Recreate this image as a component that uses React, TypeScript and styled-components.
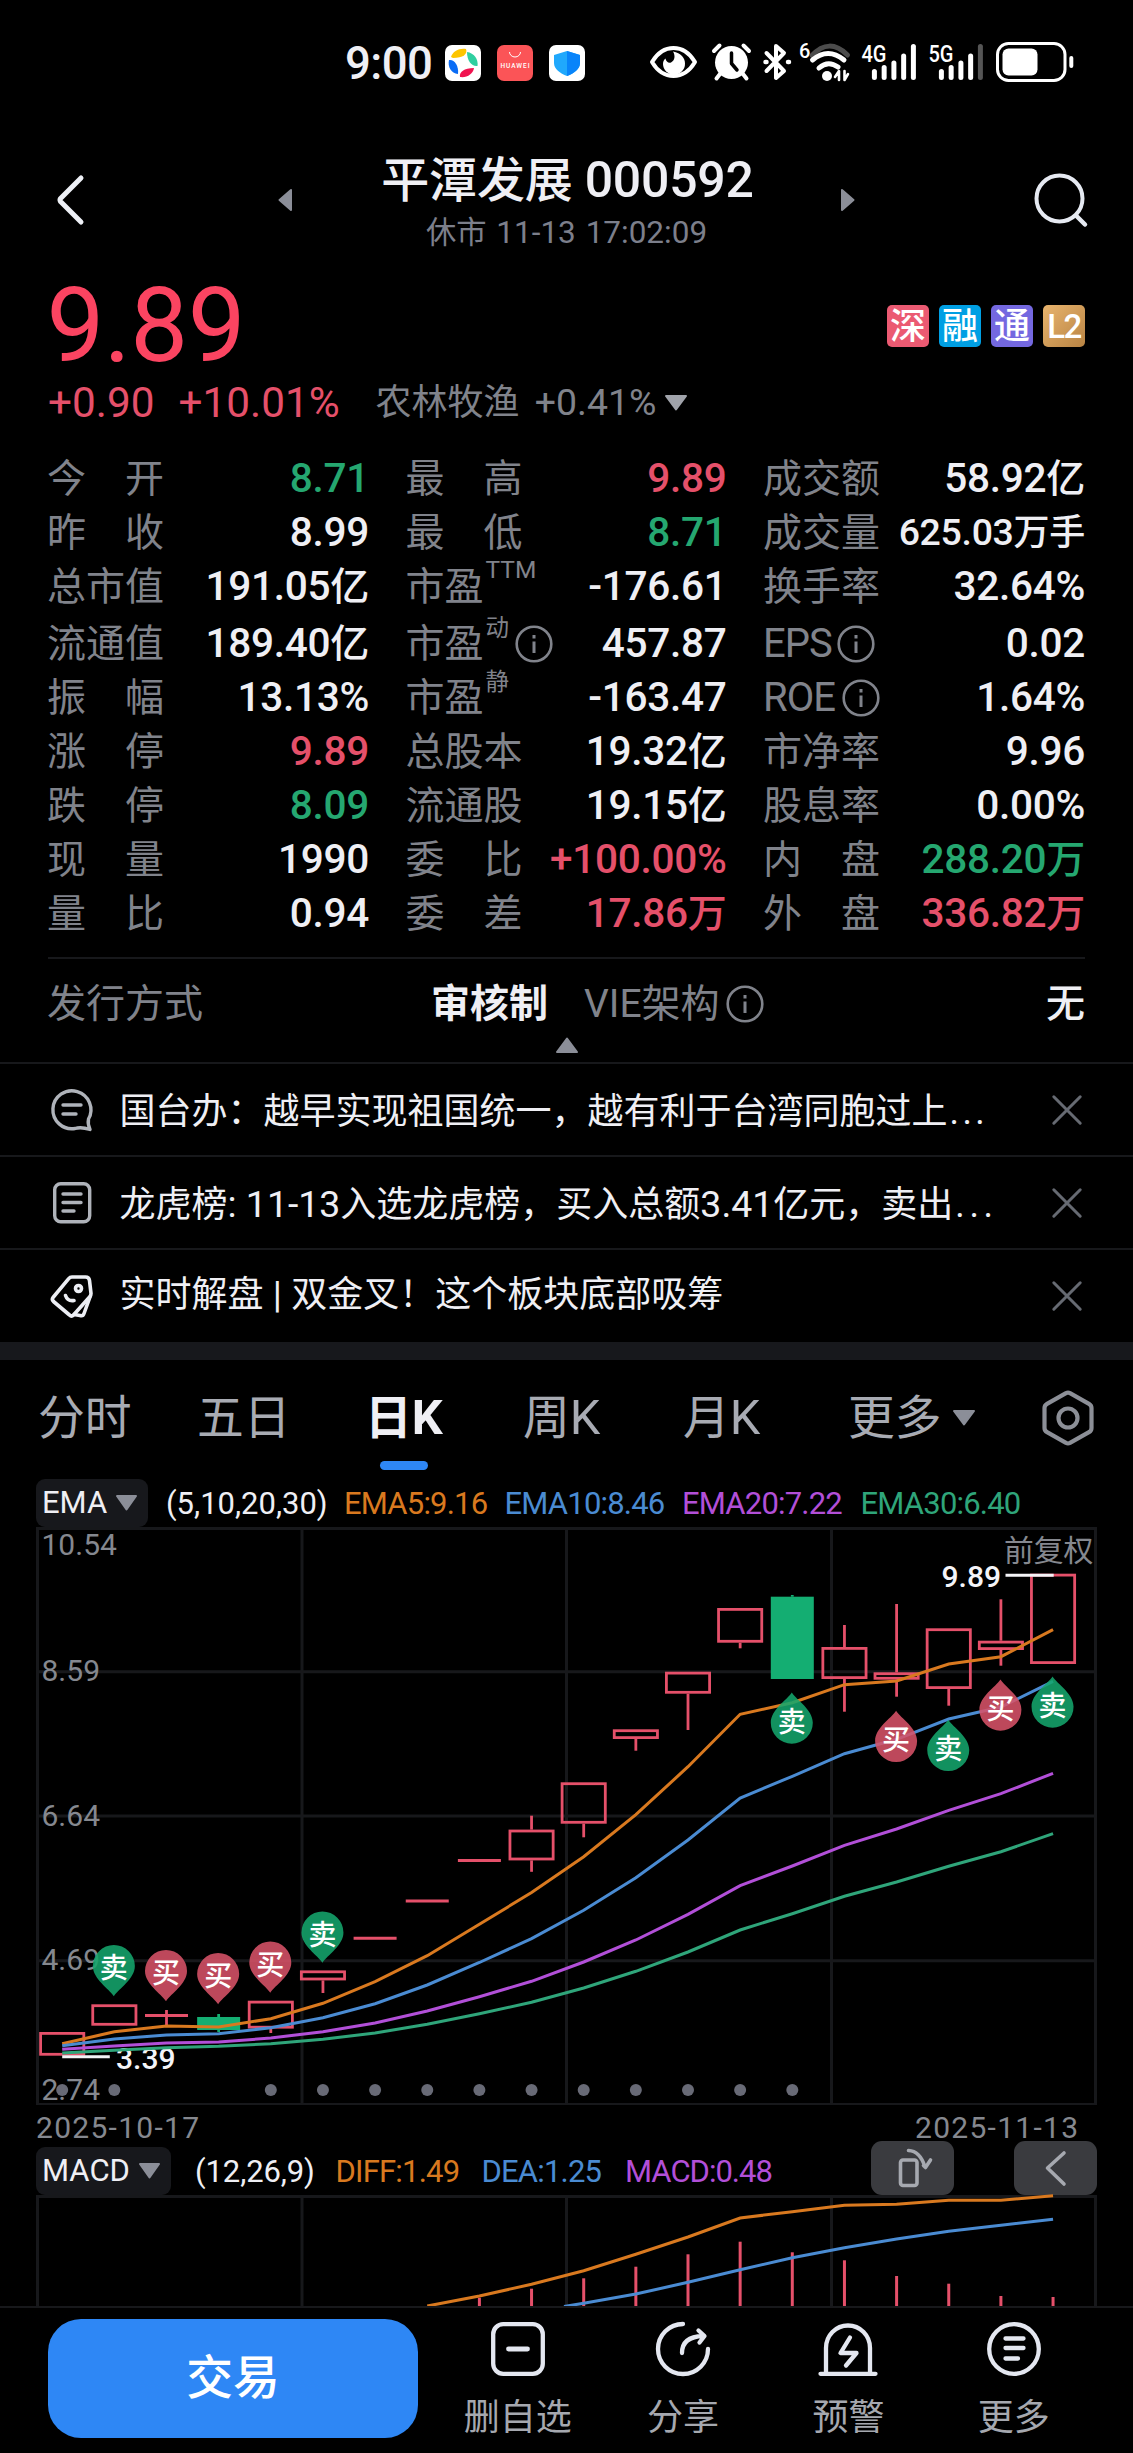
import React from 'react';
import styled, { createGlobalStyle } from 'styled-components';

const C = {
  red: '#e5506a',
  redStrong: '#fb4461',
  green: '#25a770',
  fill: '#14ae72',
  text: '#efeff4',
  label: '#80838b',
  sub: '#7c7f8b',
  line: '#17181b',
  panel: '#17181c',
  orange: '#d9791f',
  blue: '#4a8bd2',
  purple: '#b24fd8',
  mint: '#2fa57a',
};

const FONT = 'Roboto, "Noto Sans CJK SC", sans-serif';

const GlobalStyle = createGlobalStyle`
  html, body { margin: 0; padding: 0; background: #000; }
  body { font-family: ${FONT}; color: ${C.text}; -webkit-font-smoothing: antialiased; }
  * { box-sizing: border-box; }
  svg { display: block; flex: none; overflow: visible; }
`;

const Screen = styled.div`
  width: 1133px;
  height: 2453px;
  background: #000;
  display: flex;
  flex-direction: column;
  overflow: hidden;
  white-space: nowrap;
`;

const Latin = styled.span`
  font-size: 1.04em;
  line-height: 1;
`;

/** Latin runs are set slightly larger than the Chinese glyphs beside them. */
const Mix = ({ children }: { children: string }) => (
  <>
    {children.split(/([\x20-\x7e]+)/).map((part, i) =>
      i % 2 ? <Latin key={i}>{part}</Latin> : part,
    )}
  </>
);

/* ---------- status bar ---------- */

const StatusBar = styled.header`
  height: 126px;
  flex: none;
  display: flex;
  justify-content: space-between;
  align-items: center;
  padding: 0 53px 0 345px;
`;

const StatusGroup = styled.div<{ $gap?: number }>`
  display: flex;
  align-items: center;
  gap: ${(p) => p.$gap ?? 0}px;
`;

const Clock = styled.span`
  width: 84px;
  padding-top: 2px;
  font-size: 45.5px;
  font-weight: 500;
  line-height: 50px;
  letter-spacing: -0.6px;
`;

const StatusIcon = ({ x, w, children }: { x: number; w: number; children: React.ReactNode }) => (
  <svg width={w} height={44} viewBox={`${x} 41 ${w} 44`} fill="none" stroke="#fff" strokeLinecap="round" strokeLinejoin="round">
    {children}
  </svg>
);

const Signal = ({ x, label, weak }: { x: number; label: string; weak?: boolean }) => (
  <>
    <text x={x - 10.5} y={62} fontFamily={FONT} fontSize={24} fontWeight={500} textLength={25} lengthAdjust="spacingAndGlyphs" fill="#fff" stroke="none">
      {label}
    </text>
    {[71.5, 67.5, 63, 56, 46.5].map((top, i) => (
      <path key={i} d={`M${x + 2.4 + i * 9.75} ${top}V77.5`} strokeWidth={5} stroke={weak && i === 4 ? '#555' : '#fff'} />
    ))}
  </>
);

/* ---------- title ---------- */

const TitleBar = styled.div`
  height: 149px;
  flex: none;
  display: flex;
  align-items: center;
  padding: 0 45px 2px 57px;
`;

const TitleBlock = styled.div`
  flex: 1;
  padding-top: 11px;
  text-align: center;
`;

const StockName = styled.h1`
  margin: 0;
  padding-left: 2px;
  font-size: 48px;
  font-weight: 500;
  line-height: 56px;
  letter-spacing: -0.2px;
`;

const MarketTime = styled.div`
  font-size: 30.3px;
  line-height: 48px;
  color: ${C.sub};
  word-spacing: 2px;
`;

const Spacer = styled.div<{ $w: number }>`
  width: ${(p) => p.$w}px;
  flex: none;
`;

/* ---------- price ---------- */

const PriceRow = styled.div`
  height: 102px;
  flex: none;
  display: flex;
  align-items: center;
  justify-content: space-between;
  padding: 0 48px 0 46.5px;
`;

const Price = styled.div`
  font-size: 103px;
  line-height: 102px;
  color: ${C.redStrong};
  letter-spacing: -0.6px;
`;

const Badges = styled.div`
  display: flex;
  gap: 10px;
`;

const Badge = styled.span<{ $bg: string }>`
  width: 42px;
  height: 42px;
  border-radius: 5px;
  background: ${(p) => p.$bg};
  display: flex;
  align-items: center;
  justify-content: center;
  font-size: 36px;
  font-weight: 500;
  line-height: 42px;
  padding-top: 1px;
  color: #fff;
`;

const L2 = styled.span`
  font-size: 33px;
  letter-spacing: -1.5px;
`;

const ChangeRow = styled.div`
  height: 52px;
  flex: none;
  display: flex;
  align-items: center;
  padding-left: 48px;
  line-height: 52px;
`;

const Change = styled.span<{ $w: number }>`
  width: ${(p) => p.$w}px;
  font-size: 42.3px;
  color: ${C.red};
`;

const Sector = styled.span`
  font-size: 36px;
  color: ${C.label};
  word-spacing: 6px;
  margin-right: 9px;
`;

/* ---------- quote grid ---------- */

const QuoteGrid = styled.div`
  margin: 23px 48px 16px;
  flex: none;
  display: grid;
  grid-template-columns: 321px 320px 321px;
  grid-template-rows: 54px 54px 54px 57px repeat(5, 54px);
  justify-content: space-between;
  align-items: end;
`;

const Cell = styled.div`
  display: flex;
  justify-content: space-between;
  height: 54px;
  line-height: 54px;
  font-size: 39px;
`;

const CellLabel = styled.span<{ $packed?: boolean }>`
  min-width: 117px;
  margin-left: -1px;
  display: flex;
  justify-content: ${(p) => (p.$packed ? 'flex-start' : 'space-between')};
  align-items: center;
  color: ${C.label};
`;

const Sup = styled.span<{ $latin?: boolean }>`
  font-size: ${(p) => (p.$latin ? 24.5 : 23.5)}px;
  line-height: 24px;
  align-self: flex-start;
  margin: ${(p) => (p.$latin ? '-2px 0 0 2px' : '-1px 6px 0 2px')};
`;

const CellValue = styled.span<{ $tone?: string; $small?: boolean }>`
  color: ${(p) => p.$tone ?? C.text};
  font-weight: 500;
  font-size: ${(p) => (p.$small ? 36 : 39)}px;
  letter-spacing: -0.3px;
`;

const LabelText = styled.span<{ $latin: boolean }>`
  font-size: ${(p) => (p.$latin ? 40 : 39)}px;
  letter-spacing: ${(p) => (p.$latin ? -1 : 0)}px;
`;

const InfoSlot = styled.span<{ $gap: number }>`
  margin-left: ${(p) => p.$gap}px;
  padding-bottom: 1px;
`;

const Info = () => (
  <svg width="38" height="38" viewBox="0 0 38 38" fill="none" stroke={C.label} strokeWidth="2.6">
    <circle cx="19" cy="19" r="17.3" />
    <path d="M19 16.5V28M19 10v3.6" strokeWidth="3" />
  </svg>
);

type Quote = { l: string; v: string; t?: string; sup?: string; info?: number; small?: boolean };
const G = C.green;
const R = C.red;
const quotes: Quote[] = [
  { l: '今开', v: '8.71', t: G }, { l: '最高', v: '9.89', t: R }, { l: '成交额', v: '58.92亿' },
  { l: '昨收', v: '8.99' }, { l: '最低', v: '8.71', t: G }, { l: '成交量', v: '625.03万手', small: true },
  { l: '总市值', v: '191.05亿' }, { l: '市盈', sup: 'TTM', v: '-176.61' }, { l: '换手率', v: '32.64%' },
  { l: '流通值', v: '189.40亿' }, { l: '市盈', sup: '动', info: 0, v: '457.87' }, { l: 'EPS', info: 5, v: '0.02' },
  { l: '振幅', v: '13.13%' }, { l: '市盈', sup: '静', v: '-163.47' }, { l: 'ROE', info: 7, v: '1.64%' },
  { l: '涨停', v: '9.89', t: R }, { l: '总股本', v: '19.32亿' }, { l: '市净率', v: '9.96' },
  { l: '跌停', v: '8.09', t: G }, { l: '流通股', v: '19.15亿' }, { l: '股息率', v: '0.00%' },
  { l: '现量', v: '1990' }, { l: '委比', v: '+100.00%', t: R }, { l: '内盘', v: '288.20万', t: G },
  { l: '量比', v: '0.94' }, { l: '委差', v: '17.86万', t: R }, { l: '外盘', v: '336.82万', t: R },
];

const QuoteLabel = ({ q }: { q: Quote }) => {
  if (q.sup || q.info !== undefined) {
    return (
      <CellLabel $packed>
        <LabelText $latin={!q.sup}>{q.l}</LabelText>
        {q.sup && <Sup $latin={q.sup === 'TTM'}>{q.sup}</Sup>}
        {q.info !== undefined && <InfoSlot $gap={q.info}><Info /></InfoSlot>}
      </CellLabel>
    );
  }
  return (
    <CellLabel>
      {q.l.split('').map((c) => <span key={c}>{c}</span>)}
    </CellLabel>
  );
};

const IssueRow = styled.div`
  margin: 0 48px;
  flex: none;
  height: 75px;
  padding-top: 17px;
  border-top: 2px solid ${C.line};
  display: flex;
  align-items: center;
  font-size: 39px;
  line-height: 55px;
`;

const IssueCell = styled.div<{ $w: number }>`
  width: ${(p) => p.$w}px;
  display: flex;
  align-items: center;
  justify-content: space-between;
`;

const Dim = styled.span`
  display: flex;
  align-items: center;
  gap: 6px;
  margin-left: -1px;
  color: ${C.label};
`;

const Strong = styled.span`
  font-weight: 700;
`;

const Medium = styled.span`
  font-weight: 500;
`;

const Collapse = styled.div`
  height: 30px;
  flex: none;
  display: flex;
  justify-content: center;
  padding-top: 5px;
`;

/* ---------- news ---------- */

const NewsRow = styled.div<{ $h: number; $shift: number }>`
  height: ${(p) => p.$h}px;
  flex: none;
  display: flex;
  align-items: center;
  padding: 0 51px 0 50px;
  border-top: 2px solid ${C.line};
  > span {
    margin-top: ${(p) => p.$shift}px;
  }
`;

const NewsText = styled.span`
  flex: 1;
  margin-left: 26.5px;
  font-size: 36px;
  line-height: 50px;
`;

const Ellipsis = styled.i<{ $wide?: boolean }>`
  font-style: normal;
  letter-spacing: ${(p) => (p.$wide ? 4.6 : 3.4)}px;
  margin-left: 2px;
`;

const Cross = () => (
  <svg width="30" height="30" viewBox="0 0 30 30" stroke="#666a72" strokeWidth="3" strokeLinecap="round">
    <path d="M1.8 1.8L28.2 28.2M28.2 1.8L1.8 28.2" />
  </svg>
);

const Band = styled.div`
  height: 18px;
  flex: none;
  background: ${C.panel};
`;

/* ---------- tabs ---------- */

const Tabs = styled.nav`
  height: 119px;
  flex: none;
  display: grid;
  grid-template-columns: 159px 168px 158px 160px 165px 194px 52px;
  padding: 28px 0 0 38px;
`;

const Tab = styled.div<{ $active?: boolean }>`
  width: fit-content;
  font-size: 46.8px;
  line-height: 60px;
  color: ${(p) => (p.$active ? C.text : '#a8abb3')};
  font-weight: ${(p) => (p.$active ? 700 : 400)};
  display: grid;
  align-content: start;
  justify-items: center;
`;

const TabRow = styled.div`
  display: flex;
  align-items: center;
  gap: 11px;
`;

const TabMark = styled.div`
  width: 48px;
  height: 9px;
  margin-top: 13px;
  border-radius: 4.5px;
  background: #2e87f5;
`;

const Gear = styled.div`
  padding-top: 2px;
`;

/* ---------- indicators ---------- */

const IndicatorRow = styled.div<{ $h: number }>`
  height: ${(p) => p.$h}px;
  flex: none;
  display: flex;
  align-items: flex-end;
  padding: 0 36px;
`;

const Chip = styled.div<{ $w: number }>`
  width: ${(p) => p.$w}px;
  height: 48px;
  flex: none;
  border-radius: 9px;
  background: ${C.panel};
  display: flex;
  align-items: center;
  justify-content: space-between;
  padding: 0 11px 0 6px;
  font-size: 31px;
  line-height: 50px;
`;

const Legend = styled.span<{ $w: number; $c?: string; $ls?: number }>`
  width: ${(p) => p.$w}px;
  flex: none;
  color: ${(p) => p.$c ?? C.text};
  font-size: 31px;
  line-height: 50px;
  height: 48px;
  letter-spacing: ${(p) => p.$ls ?? -0.8}px;
`;

const ToolButton = styled.button`
  width: 83px;
  height: 54px;
  flex: none;
  padding: 0;
  border: 0;
  border-radius: 11px;
  background: #3a3b3f;
`;

const Push = styled.div`
  flex: 1;
`;

type TriProps = { dir: 'up' | 'down' | 'left' | 'right'; w: number; h: number; c?: string };
const Tri = ({ dir, w, h, c = '#8b8e98' }: TriProps) => {
  const d = {
    up: `M${w / 2} 1.5L${w - 1} ${h - 1}H1Z`,
    down: `M1 1H${w - 1}L${w / 2} ${h - 1.5}Z`,
    left: `M${w - 1} 1V${h - 1}L1.5 ${h / 2}Z`,
    right: `M1 1V${h - 1}L${w - 1.5} ${h / 2}Z`,
  }[dir];
  return (
    <svg width={w} height={h} viewBox={`0 0 ${w} ${h}`}>
      <path d={d} fill={c} stroke={c} strokeWidth="2" strokeLinejoin="round" />
    </svg>
  );
};

/* ---------- candle chart ---------- */

const cx = (i: number) => 62.2 + i * 52.15;
const GRID = '#17181b';

type Candle = { o: number; c: number; hi?: number; lo?: number; kind?: 'flat' | 'down' };
const candles: Candle[] = [
  { o: 2032, c: 2055.7 },
  { o: 2004.3, c: 2025.7 },
  { o: 2015.4, c: 2015.4, hi: 2010, lo: 2026, kind: 'flat' },
  { o: 2017, c: 2030, hi: 2014, lo: 2032, kind: 'down' },
  { o: 2000.7, c: 2028.6, lo: 2033 },
  { o: 1970.4, c: 1980.4, lo: 1993 },
  { o: 1938.2, c: 1938.2, kind: 'flat' },
  { o: 1901, c: 1901, kind: 'flat' },
  { o: 1860.4, c: 1860.4, kind: 'flat' },
  { o: 1829.6, c: 1860.4, hi: 1815.7, lo: 1871.8 },
  { o: 1782.3, c: 1823.7, lo: 1837.3 },
  { o: 1729.3, c: 1739, lo: 1750.7 },
  { o: 1671.7, c: 1693.7, lo: 1730 },
  { o: 1608, c: 1642.7, lo: 1648.3 },
  { o: 1596.7, c: 1679, hi: 1595, kind: 'down' },
  { o: 1647, c: 1679, hi: 1625, lo: 1711.7 },
  { o: 1672.3, c: 1679.7, hi: 1604, lo: 1696.7 },
  { o: 1628.3, c: 1689, lo: 1705.7 },
  { o: 1640.7, c: 1650, hi: 1599.3, lo: 1665.7 },
  { o: 1573.7, c: 1664 },
];

const averages: { color: string; y: number[] }[] = [
  { color: C.orange, y: [2043.7, 2031.7, 2026, 2027, 2018.7, 2003.3, 1981.7, 1955.7, 1924.3, 1892.5, 1856.7, 1814.7, 1766.7, 1714.3, 1702.7, 1684.7, 1681, 1664, 1656.7, 1629.7] },
  { color: C.blue, y: [2045.7, 2039, 2035, 2033.7, 2027.7, 2017.7, 2003.7, 1985, 1962.5, 1938.6, 1910.3, 1877.7, 1840, 1798, 1776.3, 1753.7, 1739.3, 1719, 1707, 1681.3] },
  { color: C.purple, y: [2049.3, 2046, 2043, 2042, 2038, 2031.7, 2023, 2011, 1996.7, 1981.3, 1962, 1940, 1914.3, 1885.7, 1866, 1845.3, 1829, 1810.3, 1793.7, 1773.3] },
  { color: C.mint, y: [2053, 2050.3, 2047.7, 2046.3, 2043.7, 2039.3, 2033, 2024.3, 2013.7, 2002.3, 1988, 1971.3, 1952, 1930, 1913.7, 1896.3, 1882, 1866.3, 1851.7, 1833.7] },
];

const pins: { i: number; y: number; sell?: boolean; up?: boolean }[] = [
  { i: 1, y: 1966, sell: true }, { i: 2, y: 1971 }, { i: 3, y: 1974 }, { i: 4, y: 1962.5 },
  { i: 5, y: 1932.5, sell: true }, { i: 14, y: 1722.7, sell: true, up: true }, { i: 16, y: 1741, up: true },
  { i: 17, y: 1750, sell: true, up: true }, { i: 18, y: 1709.7, up: true }, { i: 19, y: 1706.7, sell: true, up: true },
];

const dots = [0, 1, 4, 5, 6, 7, 8, 9, 10, 11, 12, 13, 14];
const points = (ys: number[], from = 0) => ys.map((y, k) => `${cx(from + k)},${y}`).join(' ');

const CandleMark = ({ d, i }: { d: Candle; i: number }) => {
  const x = cx(i);
  const down = d.kind === 'down';
  const color = down ? C.fill : C.red;
  return (
    <g stroke={color} strokeWidth="2.8" fill="none">
      {d.hi !== undefined && <path d={`M${x} ${d.hi}V${d.o}`} />}
      {d.lo !== undefined && <path d={`M${x} ${d.c}V${d.lo}`} />}
      {d.kind === 'flat' && <path d={`M${x - 21.5} ${d.o}h43`} strokeWidth="3" />}
      {down && <rect x={x - 21.5} y={d.o} width="43" height={d.c - d.o} fill={color} stroke="none" />}
      {!d.kind && <rect x={x - 21.6} y={d.o + 1.4} width="43.2" height={d.c - d.o - 2.8} />}
    </g>
  );
};

const CandleChart = () => (
  <svg width="1133" height="614" viewBox="0 1527 1133 614" fontFamily={FONT}>
    <g stroke={GRID} strokeWidth="3" fill="none">
      <path d="M36 1528.5H1097M37.5 1528V2105M1095.5 1528V2105M302 1528V2104M566.5 1528V2104M831.5 1528V2104M37 1671.8H1095M37 1816H1095M37 1960.8H1095" />
      <path d="M36 2104H1097" strokeWidth="2" />
    </g>
    <g fontSize="30" fill="#85888f">
      <text x="41.5" y="1555">10.54</text>
      <text x="41.5" y="1681.4">8.59</text>
      <text x="41.5" y="1826.2">6.64</text>
      <text x="41.5" y="1970.2">4.69</text>
      <text x="41.5" y="2099.8">2.74</text>
      <text x="36" y="2138" textLength="163">2025-10-17</text>
      <text x="915" y="2138" textLength="163">2025-11-13</text>
      <text x="1004" y="1561" fontSize="29.8">前复权</text>
    </g>
    {candles.map((d, i) => <CandleMark key={i} d={d} i={i} />)}
    <path d="M1005.5 1575.3H1053.7M62.2 2056.7H109.8" stroke="#f4f4f8" strokeWidth="3" />
    <g fontSize="30" fontWeight="500" fill="#f4f4f8">
      <text x="941.5" y="1586.5">9.89</text>
      <text x="116" y="2069">3.39</text>
    </g>
    {averages.map((a) => (
      <polyline key={a.color} points={points(a.y)} fill="none" stroke={a.color} strokeWidth="3" />
    ))}
    {dots.map((i) => <circle key={i} cx={cx(i)} cy={2090} r="6" fill="#686a76" />)}
    {pins.map((p) => (
      <g key={p.i} transform={`translate(${cx(p.i) - 0.5} ${p.y})`}>
        <path
          d="M0 30.2C-5 22.5 -21 13 -21 0A21 21 0 0 1 21 0C21 13 5 22.5 0 30.2Z"
          transform={p.up ? 'scale(1 -1)' : undefined}
          fill={p.sell ? '#15a76d' : '#d95369'}
          fillOpacity="0.87"
        />
        <text x="0" y={p.up ? 8.8 : 12} fontSize="28" fontWeight="500" textAnchor="middle" fill="#fff">
          {p.sell ? '卖' : '买'}
        </text>
      </g>
    ))}
  </svg>
);

/* ---------- MACD chart ---------- */

const macdBars = [2297.7, 2288.7, 2278.3, 2266.7, 2254.3, 2241.7, 2252.3, 2260.3, 2276, 2283.7, 2296, 2297];
const diff = [2306, 2296, 2284.3, 2270.7, 2254.3, 2237, 2218, 2211.7, 2205.3, 2204.3, 2200.3, 2200.3, 2195.7];
const dea = [2303.3, 2294, 2282.3, 2269.7, 2257.7, 2247.7, 2239, 2231.3, 2225.3, 2219.3];

const MacdChart = () => (
  <svg width="1133" height="111" viewBox="0 2195 1133 111">
    <path d="M36 2196.5H1097M37.5 2196V2306M302 2196V2306M566.5 2196V2306M831.5 2196V2306M1095.5 2196V2306" stroke={GRID} strokeWidth="3" />
    {macdBars.map((y, k) => (
      <path key={k} d={`M${cx(8 + k)} ${y}V2306`} stroke={C.red} strokeWidth="3" />
    ))}
    <g fill="none" strokeWidth="3">
      <polyline points={points(diff, 7)} stroke={C.orange} />
      <polyline points={`564,2306.5 ${points(dea, 10)}`} stroke={C.blue} />
    </g>
  </svg>
);

/* ---------- bottom bar ---------- */

const BottomBar = styled.footer`
  height: 147px;
  flex: none;
  border-top: 2px solid ${C.line};
  background: #000;
  display: flex;
  padding-left: 48px;
  position: relative;
`;

const TradeButton = styled.button`
  width: 370px;
  height: 119px;
  margin: 11px 17px 0 0;
  padding: 0 0 1px;
  border: 0;
  border-radius: 33px;
  background: #2e87f5;
  color: #fff;
  font-family: inherit;
  font-size: 46.8px;
  font-weight: 500;
  line-height: 60px;
`;

const Action = styled.div`
  width: 165.4px;
  padding-top: 14px;
  display: flex;
  flex-direction: column;
  align-items: center;
  gap: 20px;
  font-size: 36px;
  line-height: 44px;
  color: #a5a8af;
`;

const ActionIcon = ({ children }: { children: React.ReactNode }) => (
  <svg width="60" height="54" viewBox="-3 0 60 54" fill="none" stroke="#e4e7f0" strokeWidth="4.3" strokeLinecap="round" strokeLinejoin="round">
    {children}
  </svg>
);

export default function App() {
  return (
    <>
      <GlobalStyle />
      <Screen>
        <StatusBar>
          <StatusGroup $gap={16}>
            <Clock>9:00</Clock>
            <svg width="36" height="36" viewBox="0 0 36 36">
              <rect width="36" height="36" rx="7" fill="#fff" />
              <path d="M6 12C8 6 14 3 21 4C23 9 18 13 8 13Z" fill="#fdc500" />
              <path d="M22 7C29 8 33.500 14 32.500 21C27 22 22 16 22 7Z" fill="#2fcfa0" />
              <path d="M29 23C28 29 22 33 15 32C14 27 19 23 29 23Z" fill="#f0134f" />
              <path d="M13 29C6 28 2.500 22 4 15C9 14 14 20 13 29Z" fill="#0a6cf5" />
            </svg>
            <svg width="36" height="36" viewBox="0 0 36 36">
              <rect width="36" height="36" rx="7" fill="#fb5457" />
              <path d="M12.500 7a5.500 5 0 0 0 11 0" fill="none" stroke="#fff" strokeWidth="1" />
              <text x="3.500" y="23" fontFamily={FONT} fontSize="6.500" fontWeight="500" fill="#fff" textLength="29">HUAWEI</text>
            </svg>
            <svg width="36" height="36" viewBox="0 0 36 36">
              <rect width="36" height="36" rx="7" fill="#fff" />
              <path d="M18 6L31 10V18C31 24 25 28.500 18 31C11 28.500 5 24 5 18V10Z" fill="#20a8fc" />
              <path d="M18 6L31 10V18C31 24 25 28.500 18 31Z" fill="#0884fa" />
            </svg>
          </StatusGroup>
          <StatusGroup>
            <StatusIcon x={648} w={58}>
              <path d="M652 62C658 52 666 48 673.500 48S689 52 695 62C689 72 681 76 673.500 76S658 72 652 62Z" strokeWidth="4" />
              <path d="M673 51.500C681 53 685 58 685 63.500A11 11 0 0 1 663 64C663 61.500 664 59.500 665.500 58.500C666 61.500 668.500 63.500 671 62.500C675 60.500 675.500 55.500 673 51.500Z" fill="#fff" stroke="none" />
            </StatusIcon>
            <StatusIcon x={706} w={52}>
              <circle cx="731.500" cy="62.500" r="16.500" fill="#fff" stroke="none" />
              <path d="M714 51L719.500 45.500M749 51L743.500 45.500M720 74L716.500 78.500M743 74L746.500 78.500" strokeWidth="4" />
              <path d="M731.500 53V63.500L737 70" stroke="#000" strokeWidth="3.500" />
            </StatusIcon>
            <StatusIcon x={758} w={38}>
              <path d="M766.500 53L784 71L776 78V46L784 53L766.500 71" strokeWidth="4" />
              <path d="M765.500 62h1M788 62h1" strokeWidth="4.500" />
            </StatusIcon>
            <StatusIcon x={796} w={61}>
              <text x="799" y="58" fontFamily={FONT} fontSize="20" fontWeight="500" fill="#fff" stroke="none">6</text>
              <path d="M812 55.500Q829 37 847.500 55" stroke="#4c4c4c" strokeWidth="5" />
              <path d="M812.500 60Q828 47 844 60" strokeWidth="5" />
              <path d="M819 68Q828 60 838 67" strokeWidth="5" />
              <circle cx="827" cy="76" r="5" fill="#fff" stroke="none" />
              <path d="M835 77L839 71V80M844.500 71V80L848 74" strokeWidth="2.600" />
            </StatusIcon>
            <StatusIcon x={857} w={64}><Signal x={872} label="4G" /></StatusIcon>
            <StatusIcon x={921} w={69}><Signal x={939} label="5G" weak /></StatusIcon>
            <StatusIcon x={990} w={90}>
              <rect x="997.500" y="43.500" width="67.500" height="37" rx="11" strokeWidth="3" />
              <rect x="1002.500" y="48.500" width="35" height="27" rx="6" fill="#fff" stroke="none" />
              <path d="M1071.300 58V66" strokeWidth="4" />
            </StatusIcon>
          </StatusGroup>
        </StatusBar>

        <TitleBar>
          <svg width="27" height="50" viewBox="0 0 27 50" fill="none" stroke="#eef0f6" strokeWidth="5" strokeLinecap="round" strokeLinejoin="round">
            <path d="M24 3L3.500 23.500Q2.500 25 3.500 26.500L24 47" />
          </svg>
          <Spacer $w={194} />
          <Tri dir="left" w={14} h={22} />
          <TitleBlock>
            <StockName><Mix>平潭发展 000592</Mix></StockName>
            <MarketTime><Mix>休市 11-13 17:02:09</Mix></MarketTime>
          </TitleBlock>
          <Tri dir="right" w={14} h={22} />
          <Spacer $w={179} />
          <svg width="54" height="54" viewBox="0 0 54 54" fill="none" stroke="#e6eaf2" strokeWidth="4" strokeLinecap="round">
            <circle cx="25.500" cy="25.500" r="23" />
            <path d="M42.500 43L51 51.500" strokeWidth="4.500" />
          </svg>
        </TitleBar>

        <PriceRow>
          <Price>9.89</Price>
          <Badges>
            <Badge $bg="#eb5a72">深</Badge>
            <Badge $bg="#009fe3">融</Badge>
            <Badge $bg="#7468e0">通</Badge>
            <Badge $bg="linear-gradient(135deg, #e8b46e, #b98444)"><L2>L2</L2></Badge>
          </Badges>
        </PriceRow>
        <ChangeRow>
          <Change $w={130.5}>+0.90</Change>
          <Change $w={197}>+10.01%</Change>
          <Sector><Mix>农林牧渔 +0.41%</Mix></Sector>
          <Tri dir="down" w={22} h={16} c="#a0a3aa" />
        </ChangeRow>

        <QuoteGrid>
          {quotes.map((q) => (
            <Cell key={q.l + (q.sup ?? '')}>
              <QuoteLabel q={q} />
              <CellValue $tone={q.t} $small={q.small}><Mix>{q.v}</Mix></CellValue>
            </Cell>
          ))}
        </QuoteGrid>

        <IssueRow>
          <IssueCell $w={500}><Dim>发行方式</Dim><Strong>审核制</Strong></IssueCell>
          <Spacer $w={37} />
          <IssueCell $w={500}><Dim><span>VIE架构</span><Info /></Dim><Medium>无</Medium></IssueCell>
        </IssueRow>
        <Collapse><Tri dir="up" w={22} h={16} /></Collapse>

        <NewsRow $h={93} $shift={4}>
          <svg width="43" height="44" viewBox="0 0 43 44" fill="none" stroke="#afb3ba" strokeWidth="3.4" strokeLinecap="round" strokeLinejoin="round">
            <path d="M38.500 31A19 19 0 1 0 25 40.500Q31 38.500 40 41.500Q37.500 36 38.500 31Z" />
            <path d="M13 17H31M13 26H26" />
          </svg>
          <NewsText>国台办：越早实现祖国统一，越有利于台湾同胞过上<Ellipsis>...</Ellipsis></NewsText>
          <Cross />
        </NewsRow>
        <NewsRow $h={93} $shift={4}>
          <svg width="43" height="44" viewBox="0 0 43 44" fill="none" stroke="#afb3ba" strokeWidth="3.400" strokeLinecap="round">
            <rect x="4.700" y="2.700" width="35" height="38" rx="6" />
            <path d="M13 13H31M13 21.500H31M13 30H24" />
          </svg>
          <NewsText><Mix>龙虎榜: 11-13入选龙虎榜，买入总额3.41亿元，卖出</Mix><Ellipsis $wide>...</Ellipsis></NewsText>
          <Cross />
        </NewsRow>
        <NewsRow $h={94} $shift={-2}>
          <svg width="43" height="44" viewBox="0 0 43 44" fill="none" stroke="#eceef4" strokeWidth="3.600" strokeLinecap="round" strokeLinejoin="round">
            <path d="M22 3H35.500Q39 3 39.500 6.500L41 19.500Q41 21 40 22.500L23.500 41Q21.500 43 19.500 41L3.500 27.500Q1.500 25.500 3 23.500L18.500 4.800Q20 3 22 3Z" />
            <path d="M40 23L34 39.500Q33 42.500 30 41.500L24 40.500" />
            <circle cx="28.500" cy="14.500" r="3" />
            <path d="M15.500 21.500Q17.500 27.500 24 26.500" />
          </svg>
          <NewsText><Mix>实时解盘 | 双金叉！这个板块底部吸筹</Mix></NewsText>
          <Cross />
        </NewsRow>
        <Band />

        <Tabs>
          <Tab>分时</Tab>
          <Tab>五日</Tab>
          <Tab $active><span><Mix>日K</Mix></span><TabMark /></Tab>
          <Tab><span><Mix>周K</Mix></span></Tab>
          <Tab><span><Mix>月K</Mix></span></Tab>
          <Tab><TabRow>更多<Tri dir="down" w={22} h={16} /></TabRow></Tab>
          <Gear>
            <svg width="52" height="56" viewBox="0 0 52 56" fill="none" stroke="#8c8f97" strokeWidth="4.200" strokeLinejoin="round">
              <path d="M24 3.200Q26 2.200 28 3.200L47 13.800Q49.500 15.200 49.500 18V38Q49.500 40.800 47 42.200L28 52.800Q26 53.800 24 52.800L5 42.200Q2.500 40.800 2.500 38V18Q2.500 15.200 5 13.800Z" />
              <circle cx="26" cy="28" r="9.500" />
            </svg>
          </Gear>
        </Tabs>

        <IndicatorRow $h={48}>
          <Chip $w={112}>EMA<Tri dir="down" w={21} h={16} /></Chip>
          <Spacer $w={18} />
          <Legend $w={178} $ls={0}>(5,10,20,30)</Legend>
          <Legend $w={160.5} $c={C.orange}>EMA5:9.16</Legend>
          <Legend $w={177.5} $c={C.blue}>EMA10:8.46</Legend>
          <Legend $w={178.5} $c={C.purple}>EMA20:7.22</Legend>
          <Legend $w={178} $c={C.mint}>EMA30:6.40</Legend>
        </IndicatorRow>
        <CandleChart />

        <IndicatorRow $h={54}>
          <Chip $w={135}>MACD<Tri dir="down" w={21} h={16} /></Chip>
          <Spacer $w={24} />
          <Legend $w={140.5} $ls={-0.1}>(12,26,9)</Legend>
          <Legend $w={146} $c={C.orange}>DIFF:1.49</Legend>
          <Legend $w={143.5} $c={C.blue}>DEA:1.25</Legend>
          <Legend $w={160} $c={C.purple} $ls={-1}>MACD:0.48</Legend>
          <Push />
          <ToolButton>
            <svg width="83" height="54" viewBox="0 0 83 54" fill="none" stroke="#a6a9b0" strokeWidth="3.600" strokeLinecap="round" strokeLinejoin="round">
              <rect x="29.500" y="19" width="16.500" height="25.500" rx="2.500" />
              <path d="M37.500 9.500Q49 10 54 26M52.500 24.500L54.500 26.500L59.500 19" />
            </svg>
          </ToolButton>
          <Spacer $w={60} />
          <ToolButton>
            <svg width="83" height="54" viewBox="0 0 83 54" fill="none" stroke="#a6a9b0" strokeWidth="3.600" strokeLinecap="round" strokeLinejoin="round">
              <path d="M50 12L33.500 27L50 43" />
            </svg>
          </ToolButton>
        </IndicatorRow>
        <MacdChart />

        <BottomBar>
          <TradeButton>交易</TradeButton>
          <Action>
            <ActionIcon>
              <rect x="2.200" y="2.200" width="49.600" height="49.600" rx="10" />
              <path d="M17.500 27H36.500" strokeWidth="4.800" />
            </ActionIcon>
            删自选
          </Action>
          <Action>
            <ActionIcon>
              <path d="M27 2A25 25 0 1 0 52 27" />
              <path d="M26 31C26 21 32 14.500 47 14M42.500 8.500L48.500 14L43.500 20.500" />
            </ActionIcon>
            分享
          </Action>
          <Action>
            <ActionIcon>
              <path d="M5 51V26A22 22.500 0 0 1 49 26V51M-0.500 51.800H54.500" />
              <path d="M29 15.500L19.500 31H35.500L25 43.500" />
            </ActionIcon>
            预警
          </Action>
          <Action>
            <ActionIcon>
              <circle cx="27" cy="27" r="24.800" />
              <path d="M18.500 16.500H36.500M18.500 26H36.500M18.500 36.500H31" />
            </ActionIcon>
            更多
          </Action>
        </BottomBar>
      </Screen>
    </>
  );
}
